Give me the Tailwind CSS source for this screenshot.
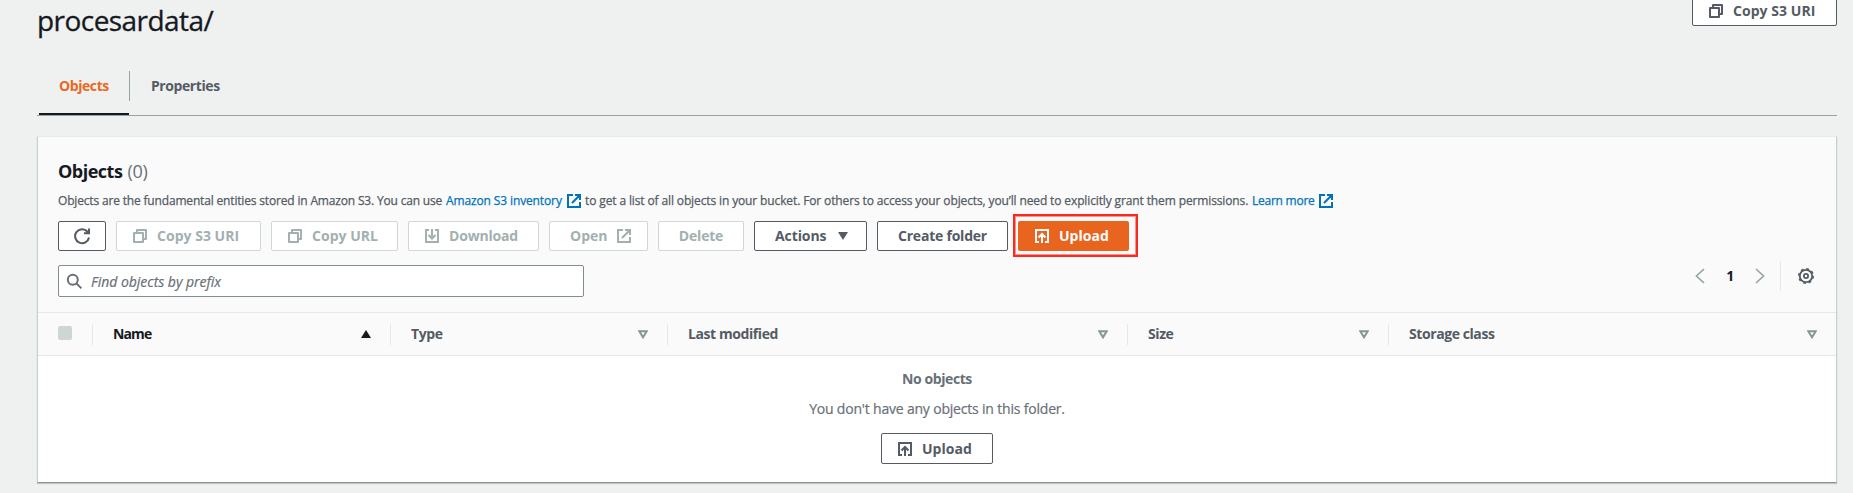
<!DOCTYPE html>
<html lang="en">
<head>
<meta charset="utf-8">
<title>procesardata/</title>
<script src="https://cdn.jsdelivr.net/npm/@tailwindcss/browser@4"></script>
</head>
<body class="h-[493px] overflow-hidden bg-[#eff1f0] pl-[37px] pr-4 font-['Open_Sans','Noto_Sans',sans-serif] text-sm tracking-[-0.42px] text-[#545b64]">
<svg class="hidden">
  <symbol id="copy" viewBox="0 0 16 16"><path d="M2 5h9v9H2zM5 5V2h9v9h-3" fill="none" stroke="currentColor" stroke-width="2" stroke-linejoin="round"/></symbol>
  <symbol id="external" viewBox="0 0 16 16"><path d="M7 2H2v12h12V9M9 2h5v5M6 10l7.500-7.500" fill="none" stroke="currentColor" stroke-width="2"/></symbol>
  <symbol id="download" viewBox="0 0 16 16"><path d="M5 2H2v12h12V2h-3M8 1v9.500M4.500 7 8 10.500 11.500 7" fill="none" stroke="currentColor" stroke-width="2"/></symbol>
  <symbol id="upload" viewBox="0 0 16 16"><path d="M5 14H2V2h12v12h-3M8 15V6M4.500 9.500 8 6l3.500 3.500" fill="none" stroke="currentColor" stroke-width="2"/></symbol>
  <symbol id="sort" viewBox="0 0 10 9"><path d="M1.300 1.200h7.400L5 7.300z" fill="none" stroke="currentColor" stroke-width="2"/></symbol>
</svg>

<header class="flex h-[71px] items-start justify-between">
  <h1 class="text-[28px] leading-10 font-normal tracking-[-0.55px] text-[#16191f] [-webkit-text-stroke:0.3px_#16191f]">procesardata/</h1>
  <button class="-mt-1 flex h-[30px] w-[145px] items-center gap-[9px] rounded-[2px] border border-[#545b64] bg-white pl-[15px] font-bold tracking-[0.05px]"><svg class="size-4"><use href="#copy"/></svg>Copy S3 URI</button>
</header>

<nav class="flex h-[45px] border-b border-[#95a5a6] pl-0.5 font-bold">
  <a class="flex w-[90px] flex-col justify-between border-b-2 border-[#16191f] pl-5 text-[#ec6820]"><span class="leading-[30px]">Objects</span></a>
  <span class="h-[30px] w-px bg-[#95a5a6]"></span>
  <a class="pl-[21px] leading-[30px]">Properties</a>
</nav>

<main class="mt-5 flex h-[347px] flex-col border border-[#c5cfcf] border-t-[#e6eaea] border-b-[#879596] bg-white shadow-[0_1px_1px_rgba(0,28,36,0.2)]">
  <section class="h-[175px] shrink-0 bg-[#fafafa] px-5 pt-5">
    <h2 class="flex gap-[5px] text-lg leading-7 font-bold tracking-[-0.5px] text-[#16191f]">Objects <span class="font-normal tracking-[-0.3px] text-[#687078]">(0)</span></h2>
    <p class="mt-[7px] flex h-[18px] items-center text-xs font-medium tracking-[-0.125px] whitespace-nowrap [-webkit-text-stroke:0.25px_currentColor]">
      <span class="w-[388px] tracking-[-0.17px]">Objects are the fundamental entities stored in Amazon S3. You can use</span>
      <span class="w-[120px] text-[#0073bb]">Amazon S3 inventory</span>
      <svg class="mr-[3px] size-4 text-[#0073bb]"><use href="#external"/></svg>
      <span class="w-[667px]">to get a list of all objects in your bucket. For others to access your objects, you’ll need to explicitly grant them permissions.</span>
      <span class="w-[66px] tracking-[-0.25px] text-[#0073bb]">Learn more</span>
      <svg class="size-4 text-[#0073bb]"><use href="#external"/></svg>
    </p>
    <div class="relative mt-[11px] flex h-[30px] gap-2.5 font-bold tracking-[0.02px] whitespace-nowrap">
      <button class="flex w-12 items-center justify-center rounded-[2px] border border-[#545b64] bg-white"><svg class="size-[18px]" viewBox="0 0 18 18" fill="none" stroke="currentColor" stroke-width="2"><path d="M16 10.500A7 7 0 1 1 14.300 4.500L16 6.200M16 1.500V6.200H11"/></svg></button>
      <button class="flex w-[145px] items-center gap-[9px] rounded-[2px] border border-[#d0d8d7] bg-white pl-[15px] text-[#a2b0b0]"><svg class="size-4"><use href="#copy"/></svg>Copy S3 URI</button>
      <button class="flex w-[127px] items-center gap-[9px] rounded-[2px] border border-[#d0d8d7] bg-white pl-[15px] text-[#a2b0b0]"><svg class="size-4"><use href="#copy"/></svg>Copy URL</button>
      <button class="flex w-[131px] items-center gap-[9px] rounded-[2px] border border-[#d0d8d7] bg-white pl-[15px] tracking-[-0.2px] text-[#a2b0b0]"><svg class="size-4"><use href="#download"/></svg>Download</button>
      <button class="flex w-[99px] items-center justify-between rounded-[2px] border border-[#d0d8d7] bg-white pr-[15px] pl-5 text-[#a2b0b0]">Open<svg class="size-4"><use href="#external"/></svg></button>
      <button class="w-[86px] rounded-[2px] border border-[#d0d8d7] bg-white tracking-[-0.2px] text-[#a2b0b0]">Delete</button>
      <button class="flex w-[113px] items-center justify-between rounded-[2px] border border-[#545b64] bg-white pr-[18px] pl-5 tracking-[-0.1px]">Actions<svg class="h-2 w-2.5"><path d="M0 0h10L5 8z" fill="currentColor"/></svg></button>
      <button class="w-[131px] rounded-[2px] border border-[#545b64] bg-white tracking-[-0.22px]">Create folder</button>
      <button class="flex w-[111px] items-center gap-[9px] rounded-[2px] bg-[#e8641f] pl-4 text-white"><svg class="size-4"><use href="#upload"/></svg>Upload</button>
      <div class="absolute -top-[7px] left-[955px] h-[43px] w-[125px] border-2 border-[#fb2a20] shadow-[inset_0_0_0_1px_rgba(251,42,32,0.5)]"></div>
    </div>
    <div class="mt-3.5 flex justify-between">
      <label class="flex h-8 w-[526px] items-center gap-2 rounded-[2px] border border-[#7f8f8f] bg-white pl-[7px] text-[#687078] italic"><svg class="size-[17px]" viewBox="0 0 17 17" fill="none" stroke="currentColor" stroke-width="2"><circle cx="6.800" cy="6.800" r="5"/><path d="m10.400 10.400 5 5"/></svg><span class="pt-0.5 tracking-[-0.02px] [-webkit-text-stroke:0.2px_currentColor]">Find objects by prefix</span></label>
      <div class="-mt-1 flex h-[30px] items-center text-[#95a5a6]">
        <svg class="h-4 w-2.5" fill="none" stroke="currentColor" stroke-width="1.700"><path d="M9 1 1.500 8 9 15"/></svg>
        <span class="w-[50px] text-center font-bold text-[#16191f]">1</span>
        <svg class="h-4 w-2.5" fill="none" stroke="currentColor" stroke-width="1.700"><path d="m1 1 7.500 7L1 15"/></svg>
        <span class="mr-[17px] ml-[15px] h-full w-px bg-[#e3e8e8]"></span>
        <svg class="mr-0.5 size-4 overflow-visible text-[#545b64]" viewBox="0 0 16 16" fill="none" stroke="currentColor"><circle cx="8" cy="8" r="6.200" stroke-width="1.800"/><circle cx="8" cy="8" r="7.300" stroke-width="1.400" stroke-dasharray="2.900 2.834"/><circle cx="8" cy="8" r="2.100" stroke-width="1.800"/></svg>
      </div>
    </div>
  </section>

  <div class="flex h-11 shrink-0 items-center border-y border-[#e6e8e8] bg-[#fafafa] font-bold">
    <div class="flex h-[21px] w-[54px] items-center pl-5"><span class="-mt-0.5 size-3.5 rounded-[2px] bg-[#ced6d5]"></span></div>
    <div class="flex h-[21px] w-[298px] items-center justify-between border-l border-[#e3e8e8] pr-[19px] pl-5 text-[#16191f]"><span class="tracking-[-0.9px]">Name</span><svg class="h-2 w-2.5"><path d="M5 0 10 8H0z" fill="currentColor"/></svg></div>
    <div class="flex h-[21px] w-[277px] items-center justify-between border-l border-[#e3e8e8] pr-[19px] pl-5">Type<svg class="h-[9px] w-2.5 text-[#879596]"><use href="#sort"/></svg></div>
    <div class="flex h-[21px] w-[460px] items-center justify-between border-l border-[#e3e8e8] pr-[19px] pl-5">Last modified<svg class="h-[9px] w-2.5 text-[#879596]"><use href="#sort"/></svg></div>
    <div class="flex h-[21px] w-[261px] items-center justify-between border-l border-[#e3e8e8] pr-[19px] pl-5">Size<svg class="h-[9px] w-2.5 text-[#879596]"><use href="#sort"/></svg></div>
    <div class="flex h-[21px] flex-1 items-center justify-between border-l border-[#e3e8e8] pr-[19px] pl-5">Storage class<svg class="h-[9px] w-2.5 text-[#879596]"><use href="#sort"/></svg></div>
  </div>

  <div class="flex flex-col items-center pt-3 text-[#687078]">
    <p class="leading-[22px] font-bold">No objects</p>
    <p class="mt-2 leading-[22px] tracking-[-0.19px] [-webkit-text-stroke:0.2px_currentColor]">You don't have any objects in this folder.</p>
    <button class="mt-[13px] flex h-[31px] w-[112px] items-center gap-[9px] rounded-[2px] border border-[#545b64] bg-white pl-[15px] font-bold tracking-[0.02px] text-[#545b64]"><svg class="size-4"><use href="#upload"/></svg>Upload</button>
  </div>
</main>
</body>
</html>
